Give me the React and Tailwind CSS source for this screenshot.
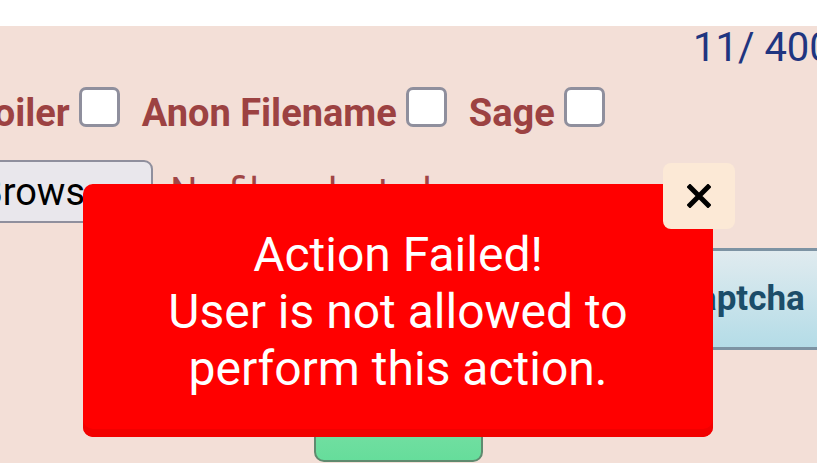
import React from 'react'

const Checkbox = () => (
  <span className="mb-[6px] inline-block h-[40px] w-[41px] shrink-0 rounded-[7px] border-[3px] border-[#8f8f9d] bg-white" />
)

const CloseIcon = () => (
  <svg width="24" height="24" viewBox="0 0 24 24" fill="none">
    <path d="M3 3L21 21M21 3L3 21" stroke="#000" strokeWidth="5" strokeLinecap="square" />
  </svg>
)

export default function App() {
  return (
    <div className="relative flex h-[463px] w-[817px] flex-col overflow-hidden bg-white font-['Roboto',sans-serif]">
      <div className="h-[26px] shrink-0 bg-white" />

      <div className="flex flex-1 flex-col bg-[#f3dfd7]">
        {/* counter */}
        <div className="h-[54px] shrink-0 pt-[2px]">
          <div className="ml-[693px] whitespace-nowrap text-[40px] leading-[40px] text-[#1f3580]">11/ 4000</div>
        </div>

        {/* options */}
        <div className="-ml-[51px] flex h-[53px] shrink-0 items-end whitespace-nowrap text-[38px] font-bold leading-[40px] text-[#9c4242]">
          <span className="mr-[9px]">Spoiler</span>
          <Checkbox />
          <span className="ml-[22px] mr-[9px]">Anon Filename</span>
          <Checkbox />
          <span className="ml-[22px] mr-[9px]">Sage</span>
          <Checkbox />
        </div>

        {/* file input */}
        <div className="-ml-[41px] mt-[27px] flex h-[63px] shrink-0 items-center whitespace-nowrap">
          <button className="h-[63px] rounded-[9px] border-[2px] border-[#8f8f9d] bg-[#e9e7ec] pl-[18px] pr-[16px] text-[38px] leading-[40px] text-black">
            Browse...
          </button>
          <span className="ml-[17px] text-[38px] leading-[40px] text-[#a04545]">No file selected.</span>
        </div>

        {/* captcha */}
        <div className="mt-[25px] flex h-[102px] shrink-0">
          <button className="ml-[640px] h-[102px] w-[220px] shrink-0 border-y-[3px] border-[#7d93a3] bg-gradient-to-b from-[#e0ebef] to-[#b4dce7] pl-[35px] text-left text-[35px] font-bold text-[#1c4d69]">
            Captcha
          </button>
        </div>

        {/* submit */}
        <div className="mt-[44px] flex shrink-0">
          <button className="ml-[314px] h-[68px] w-[169px] rounded-[10px] border-[2px] border-[#5f8a6f] bg-gradient-to-b from-[#80e0a9] to-[#66dd9b] pb-[9px] text-[38px] font-bold leading-[40px] text-[#2f5d42]">
            Submit
          </button>
        </div>
      </div>

      {/* toast */}
      <div className="absolute left-[83px] top-[184px] flex h-[253px] w-[630px] items-center justify-center rounded-[10px] bg-[#ff0000] pt-[2px] text-center text-[48px] leading-[57px] text-white shadow-[inset_0_-8px_0_#f20000]">
        <div>
          Action Failed!
          <br />
          User is not allowed to
          <br />
          perform this action.
        </div>
      </div>
      <button className="absolute left-[663px] top-[163px] flex h-[66px] w-[72px] items-center justify-center rounded-[8px] bg-[#fce9d6]">
        <CloseIcon />
      </button>
    </div>
  )
}
